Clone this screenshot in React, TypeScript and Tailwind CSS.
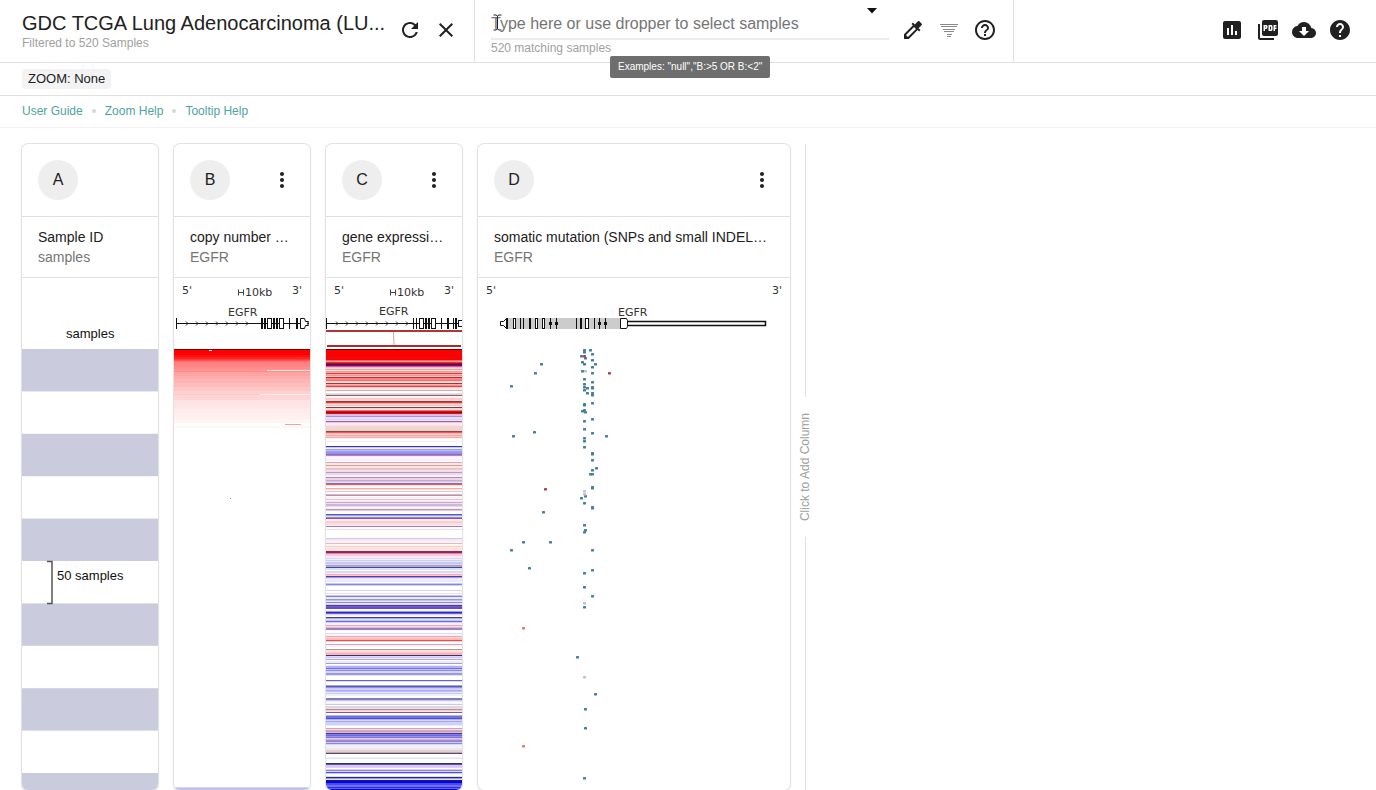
import type { ReactNode } from "react";
import {
  MdAssessment,
  MdClose,
  MdCloudDownload,
  MdColorize,
  MdHelp,
  MdHelpOutline,
  MdMoreVert,
  MdPictureAsPdf,
  MdRefresh,
} from "react-icons/md";

type Rect = [x: number, y: number, w: number, h: number];

/* Runs of colour: each entry holds from its row until the next entry. */
const EXPRESSION = `
349 700000,350 ff0000,357 ee0c0c,358 ff0000,360 ff6060,361 ffa0a0,362 e03030,363 b01020,364 600050,365 7a0a80,
366 c060a0,367 ffb8b8,368 ffdddd,369 e8a0a0,370 fff0e8,371 ff9090,372 ffb0a0,373 d04040,374 ffb0b0,375 ff9090,
376 ffc8c8,377 b83030,378 ff8080,380 ff6a6a,381 ffd0d0,382 ffe8e8,383 b03030,384 ffb0b0,385 ff8888,386 e04040,
387 ffd0d0,388 ffe8e8,390 e8a0a0,391 ffffff,393 e8e0e0,394 d8d0d8,395 906070,396 ffffff,397 ffeeee,398 ffcccc,
400 ffdddd,401 b03030,402 c84040,403 ffa8a8,404 f7e0e0,405 ffc0c0,406 fff6ee,407 a03030,408 ffd0d0,409 ffe8e8,
410 f07070,411 d01818,412 a00808,413 d81818,414 e0b0e0,415 e0c0f0,416 b090c8,417 e8e0ff,419 d8d8ff,420 f8d8f0,
421 907090,422 e8c8d8,423 ffe8ff,425 ffe0e0,426 f0d8d0,428 e8d8d0,430 e8d0d0,431 a04040,432 e06060,433 ffb0b0,
434 ffc8c8,435 e0b0a8,436 ffc8c8,437 e8b0a8,438 ffeeee,439 ffffff,441 f4eef0,442 ffffff,445 ffffff,446 3838a0,
447 c8c8ff,448 f0f0ff,449 a0a0e0,450 b8c0ff,451 a0a0e8,452 9890f0,454 8070c0,455 c080c0,456 f8e8f8,457 fff4ff,
459 f8f0ff,461 ffffff,462 d8a8a8,463 ffe4e4,465 d0a0a0,466 ffe8e8,468 f0c0c0,469 e8c8c8,470 ffe0e0,471 f0d8f0,
472 b0a0c8,473 e8d8f0,475 fff0ff,477 b090a0,478 ffd0d8,479 e0d8ff,480 c8a8d8,481 d8c8e8,482 e8e0f8,483 8070a0,
484 e06060,485 ffd8d8,486 ffffff,488 ffa8a8,489 ffd8d8,490 ffffff,491 d8c8d0,492 ffffff,494 e0b0c0,495 b890b0,
496 ffffff,497 ffeeee,499 d8c8d8,500 fff0f0,501 e8e8ff,502 e0a0b8,503 e8e0ff,504 c8b8e0,506 e8d8f0,507 ffffff,
508 ffe8e8,509 b0a0a8,510 e8c0e8,511 ffffff,514 5858c0,515 a0a0f0,516 e0e0ff,517 9090c0,518 c03898,519 ffffff,
520 fff0f0,521 ffcccc,523 ffe0e0,524 ffd8d8,525 fff0f0,526 9080c8,527 ffffff,529 e8e0f0,530 ffffff,538 d0c8f0,
539 f0e8ff,541 fff0f0,543 d8c0c0,544 fff8f0,546 ffc8c0,547 ffe8e8,548 ffe0e0,551 803060,553 e080a8,554 ffc8d8,
556 ffe8f8,558 d8d8ff,559 f0f0ff,560 c8d0ff,561 e8e8ff,562 c8c8f0,564 e0d8f0,565 a8a0b8,566 b8a8d8,567 404898,
568 d8e0ff,570 ffffff,571 d8d8f8,573 fff0f0,574 ffa8a8,575 ffc8d8,576 5838a0,577 a0a0f0,578 e0e0ff,579 f0f0ff,
580 e8e8ff,582 ffffff,583 c8c8e8,584 8888d8,585 d0d0ff,586 ffffff,590 d8d0f0,591 ffffff,593 e8e0f0,594 ffffff,
595 c8c8f8,596 8080c8,597 e8e8ff,599 9898c8,600 c0c0ff,601 e8e8ff,602 8888e8,603 e8e8ff,604 d0d0ff,605 504080,
606 8060a0,607 6048e8,609 ffffff,610 f0f0ff,611 a0a0d8,612 2828c0,613 6060e8,614 d8d8ff,615 ffe8f8,616 ffffff,
617 484078,618 a8a8ff,619 e8e8ff,620 c0c0ff,621 7070c8,622 d0d0ff,623 f8f0f8,625 e0b0b8,626 ffd8d8,627 e0b8d8,
628 a080c0,630 ffffff,633 d8d8ff,634 f8f8ff,635 f8f0f0,636 e8a8a8,637 ffd8d8,638 ffb8b8,640 d05858,641 ffc8c8,
642 ffffff,644 d0a0c8,645 fff0f0,647 ffffff,649 a89898,650 ffe0d8,652 ffc8c8,653 f0b8b8,655 483070,656 e0d8ff,
657 c8c8ff,658 f0f0ff,659 a8a8f0,660 ffffff,661 e8e8ff,663 a8a0b8,664 ffffff,665 e8e8ff,666 b0b0ff,668 7070e8,
669 c8c8ff,670 8888f0,671 d8d8ff,673 a098d8,675 e0e0ff,676 ffffff,680 6868b8,681 d8d8ff,682 ffffff,685 a8a8c0,
686 5858c0,687 9090e8,688 c8c8ff,689 d8d8ff,690 a8a8f0,691 c0c0ff,692 e8e8ff,693 c8c8ff,694 f0f0ff,696 ffffff,
698 8080b8,700 c8c8f0,701 e8e8ff,702 ffffff,703 f8f0ff,704 c8c8f0,705 ffffff,706 d8d8e8,708 e8e0e8,709 b09090,
710 ffc8c8,711 ffe0e0,712 7858a8,713 ffffff,715 b0b0e8,716 7070e0,718 5050c8,719 b0b0ff,720 d8d8ff,721 a8a8e8,
722 d0d0ff,725 e8e8ff,726 ffffff,728 c0a8c8,729 ffd8e8,730 d0a8c0,731 c8a0b0,732 e0b8d8,733 483890,734 8080f0,
735 6868e0,736 9890f0,737 7878e0,738 d8c8f0,739 e0b0c8,740 9888c8,742 c8c8ff,743 8888e0,744 d8d8ff,745 f0f0ff,
747 f8f0f0,748 f0e8e8,750 e0d0d0,752 c0a8a8,753 604870,754 ffffff,757 f0f0ff,758 e0e0ff,759 ffffff,761 ffffff,
763 303060,764 5858a8,765 d8c8f0,767 e0d0f8,768 ffffff,769 e0c8e8,770 8888f0,771 d8d8ff,772 5050d0,773 c8c8ff,
774 ffffff,776 d8d8ff,777 303060,778 9898f0,779 e8e8ff,780 1010b0,782 0000e0,783 4848ff,785 7070ff,787 3030c8,
788 6060ff,789 0808d0,790 0000c0`;

const COPY_NUMBER = `
349 800000,350 ff0000,354 fa0000,355 ff1010,357 ff2222,359 ff3a3a,360 ff5454,361 ff7272,362 ff8080,366 ff8a8a,
369 ff9494,371 ff8c8c,372 ffa2a2,376 ffacac,379 ffb4b4,383 ffbcbc,387 ffc6c6,391 ffd0d0,394 ffc6c6,395 ffd4d4,
400 ffe2e2,404 ffe6e6,408 ffebeb,414 fff0f0,419 fff4f4,423 ffffff,426 fff6f6,428 ffffff,787 d4d4f4,788 c0c0ee`;

const TOP = 278;
const BOTTOM = 790;

function toRuns(data: string) {
  const stops = data
    .trim()
    .split(/,\s*/)
    .map((entry) => {
      const [row, fill] = entry.split(" ");
      return { row: Number(row), fill: "#" + fill };
    });
  return stops.map((stop, i) => ({
    y: stop.row - TOP,
    h: (stops[i + 1]?.row ?? BOTTOM) - stop.row,
    fill: stop.fill,
  }));
}

function Heatmap({ data }: { data: string }) {
  return (
    <g shapeRendering="crispEdges">
      {toRuns(data).map((run) => (
        <rect key={run.y} x="0" y={run.y} width="136" height={Math.max(run.h, 0)} fill={run.fill} />
      ))}
    </g>
  );
}

const BLUE_DOTS: [number, number][] = [
  [104, 10], [110, 10], [104, 12], [112, 14], [101, 16], [105, 18], [112, 20], [102, 22], [104, 24], [115, 24],
  [112, 27], [61, 24], [55, 33], [31, 46], [102, 31], [112, 33], [104, 39], [112, 42], [104, 44], [104, 47],
  [107, 48], [112, 47], [104, 50], [107, 53], [112, 53], [112, 55], [112, 48], [104, 64], [104, 65], [112, 63],
  [102, 71], [104, 70], [105, 72], [104, 81], [112, 79], [104, 89], [112, 93], [54, 92], [33, 96], [126, 96],
  [104, 98], [104, 101], [104, 107], [112, 113], [112, 114], [112, 120], [116, 128], [112, 130], [110, 134],
  [112, 134], [112, 147], [112, 148], [105, 156], [101, 158], [104, 163], [112, 167], [112, 168], [63, 172],
  [104, 185], [105, 190], [104, 192], [43, 202], [70, 202], [31, 210], [112, 210], [49, 228], [104, 233],
  [112, 230], [104, 247], [112, 256], [104, 267], [97, 317], [115, 354], [105, 369], [105, 388], [104, 438],
];
const RED_DOTS: [number, number][] = [[104, 16], [129, 33], [65, 149]];
const PINK_DOTS: [number, number][] = [[43, 288], [43, 406]];
const PALE_DOTS: [number, number][] = [[105, 31], [104, 151], [104, 154], [104, 263], [104, 337]];

function Dots({ points, fill }: { points: [number, number][]; fill: string }) {
  return (
    <g fill={fill}>
      {points.map(([x, y], i) => (
        <rect key={i} x={x + 1} y={y + 61} width="3" height="2.5" rx="0.6" />
      ))}
    </g>
  );
}

function Solid({ marks }: { marks: Rect[] }) {
  return (
    <g fill="#111">
      {marks.map(([x, y, w, h], i) => (
        <rect key={i} x={x} y={y} width={w} height={h} />
      ))}
    </g>
  );
}

function Hollow({ marks }: { marks: Rect[] }) {
  return (
    <g fill="#fff" stroke="#111">
      {marks.map(([x, y, w, h], i) => (
        <rect key={i} x={x + 0.5} y={y + 0.5} width={w - 1} height={h - 1} />
      ))}
    </g>
  );
}

function Chevrons({ start, count }: { start: number; count: number }) {
  return (
    <g fill="none" stroke="#333">
      {Array.from({ length: count }, (_, i) => (
        <path key={i} d={`M${start + i * 10} 43.5l2 2-2 2`} />
      ))}
    </g>
  );
}

function Ends({ right }: { right: number }) {
  return (
    <g fontFamily="DejaVu Sans, sans-serif" fontSize="11" fill="#333">
      <text x="8" y="16">5'</text>
      <text x={right} y="16">3'</text>
    </g>
  );
}

function ScaleBar() {
  return (
    <g>
      <path d="M64.5 11.5v6M64.5 14.5h5M69.5 11.5v6" stroke="#444" fill="none" />
      <text x="71" y="18" fontFamily="DejaVu Sans, sans-serif" fontSize="11" fill="#333">10kb</text>
    </g>
  );
}

function GeneLabel({ x, y }: { x: number; y: number }) {
  return (
    <text x={x} y={y} fontFamily="DejaVu Sans, sans-serif" fontSize="11" fill="#333">EGFR</text>
  );
}

function Plot({ width, label, children }: { width: number; label: string; children: ReactNode }) {
  return (
    <svg
      viewBox={`0 0 ${width} 512`}
      role="img"
      aria-label={label}
      className="block h-[512px] w-full"
      preserveAspectRatio="xMinYMin slice"
    >
      {children}
    </svg>
  );
}

function SamplesPlot() {
  return (
    <Plot width={136} label="Sample ID">
      <g fill="#cbcbde">
        {[0, 1, 2, 3, 4, 5].map((i) => (
          <rect key={i} x="0" y={71 + i * 84.8} width="136" height="42.4" />
        ))}
      </g>
      <g fontFamily="Liberation Sans, Arial, sans-serif" fontSize="13" fill="#111">
        <text x="44" y="60">samples</text>
        <text x="35" y="302">50 samples</text>
      </g>
      <path d="M25 283.5h5v42H25" fill="none" stroke="#555" strokeWidth="1.5" />
    </Plot>
  );
}

function CopyNumberPlot() {
  return (
    <Plot width={136} label="Copy number">
      <Ends right={118} />
      <ScaleBar />
      <GeneLabel x={54} y={38} />
      <Solid marks={[[2, 40, 1, 11], [2, 45, 133, 1]]} />
      <Chevrons start={12} count={7} />
      <Solid
        marks={[[87, 40, 2, 11], [90, 40, 2, 11], [99, 40, 2, 11], [102, 40, 2, 11], [115, 40, 1, 11], [122, 40, 2, 11]]}
      />
      <Hollow marks={[[93, 40, 5, 11], [105, 40, 5, 11]]} />
      <path d="M126.500 40.5h4l1 3h3l-1 2 1 2h-3l-1 3h-4z" fill="#fff" stroke="#111" />
      <Heatmap data={COPY_NUMBER} />
      <g shapeRendering="crispEdges">
        <rect x="35" y="72" width="3" height="1" fill="#fff" />
        <rect x="93" y="92" width="43" height="1" fill="#ffe8e8" />
        <rect x="86" y="116" width="50" height="1" fill="#fff0f0" />
        <rect x="111" y="146" width="16" height="1" fill="#f2a0a0" />
        <rect x="56" y="220" width="1" height="1" fill="#8888b8" />
      </g>
    </Plot>
  );
}

function ExpressionPlot() {
  return (
    <Plot width={136} label="Gene expression">
      <Ends right={118} />
      <ScaleBar />
      <GeneLabel x={53} y={37} />
      <Solid marks={[[0, 40, 1, 11], [0, 45, 136, 1]]} />
      <Chevrons start={10} count={8} />
      <Solid
        marks={[[87, 40, 1, 11], [90, 40, 1, 11], [99, 40, 2, 11], [102, 40, 2, 11], [115, 40, 1, 11], [121, 40, 2, 11], [127, 40, 1, 11], [129, 40, 2, 11]]}
      />
      <Hollow marks={[[93, 40, 5, 11], [105, 40, 5, 11], [132, 42, 5, 7]]} />
      <rect x="0" y="52" width="136" height="2" fill="#b03535" />
      <path d="M67.500 54l.5 13" stroke="#e89a9a" />
      <rect x="1" y="67" width="134" height="2" fill="#a03030" />
      <Heatmap data={EXPRESSION} />
    </Plot>
  );
}

function MutationPlot() {
  return (
    <Plot width={312} label="Somatic mutation">
      <Ends right={294} />
      <rect x="29" y="40" width="114" height="11" fill="#ccc" />
      <GeneLabel x={140} y={38} />
      <path d="M22.500 43.5h3l3-3v10l-3-3h-3z" fill="#fff" stroke="#111" />
      <Solid
        marks={[[28, 40, 2, 11], [42, 40, 1, 11], [45, 40, 1, 11], [51, 40, 2, 11], [72, 40, 1, 11], [71, 44, 3, 3], [78, 40, 1, 11], [77, 44, 3, 3], [98, 40, 1, 11], [102, 40, 2, 11], [116, 40, 1, 11], [121, 40, 1, 11], [120, 44, 3, 3], [127, 40, 1, 11], [126, 44, 3, 3]]}
      />
      <Hollow marks={[[35, 40, 3, 11], [57, 40, 3, 11], [64, 40, 3, 11], [107, 40, 4, 11]]} />
      <rect x="149" y="43.500" width="138.500" height="4" fill="#fff" stroke="#111" strokeWidth="1.5" />
      <path d="M142.500 40.500h6l1 2v6l-1 2h-6z" fill="#fff" stroke="#111" />
      <Dots points={BLUE_DOTS} fill="#41809f" />
      <Dots points={PALE_DOTS} fill="#c6bfd0" />
      <Dots points={RED_DOTS} fill="#b8404c" />
      <Dots points={PINK_DOTS} fill="#e07878" />
    </Plot>
  );
}

function Column({
  letter,
  title,
  subtitle,
  menu = true,
  wide = false,
  children,
}: {
  letter: string;
  title: string;
  subtitle: string;
  menu?: boolean;
  wide?: boolean;
  children: ReactNode;
}) {
  return (
    <section
      className={
        "overflow-hidden rounded-md bg-white shadow-[0_0_0_1px_#e2e2e2,0_1px_3px_rgba(0,0,0,0.12)] " +
        (wide ? "w-78" : "w-34")
      }
    >
      <div className="flex items-center justify-between border-b border-[#e0e0e0] p-4">
        <span className="flex size-10 items-center justify-center rounded-full bg-[#eee] text-base">{letter}</span>
        {menu && (
          <button type="button" aria-label={`Column ${letter} menu`}>
            <MdMoreVert className="size-6" />
          </button>
        )}
      </div>
      <div className="border-b border-[#e0e0e0] px-4 py-2.5 text-sm leading-5">
        <h2 className="whitespace-nowrap">{title}</h2>
        <p className="text-[#757575]">{subtitle}</p>
      </div>
      {children}
    </section>
  );
}

function FilterIcon() {
  return (
    <svg viewBox="0 0 24 24" className="size-6" fill="none" stroke="#8a8a8a">
      <path d="M3 6.500h18M4 8.500h16M6 11.500h12M7 13.500h10M10 16.500h5M10 18.500h4" />
    </svg>
  );
}

function IconButton({ label, children }: { label: string; children: ReactNode }) {
  return (
    <button type="button" aria-label={label} className="shrink-0">
      {children}
    </button>
  );
}

export default function App() {
  return (
    <div className="flex min-h-screen flex-col bg-white font-['Liberation_Sans',Arial,sans-serif] text-[#212121]">
      <header className="flex h-[63px] border-b border-[#e0e0e0]">
        <div className="flex items-center gap-3 border-r border-[#e0e0e0] pr-4 pb-0.5 pl-[22px]">
          <div className="w-[364px] pt-0.5">
            <h1 className="text-xl leading-6 whitespace-nowrap">GDC TCGA Lung Adenocarcinoma (LU...</h1>
            <p className="text-xs leading-4 text-[#a0a0a0]">Filtered to 520 Samples</p>
          </div>
          <IconButton label="Reload">
            <MdRefresh className="size-6" />
          </IconButton>
          <IconButton label="Close">
            <MdClose className="size-6" />
          </IconButton>
        </div>
        <div className="flex items-center gap-3 border-r border-[#e0e0e0] px-4 pb-0.5">
          <div className="relative w-[398px]">
            <input
              type="text"
              aria-label="Select samples"
              placeholder="Type here or use dropper to select samples"
              className="block h-9 w-full border-b-2 border-[#ececec] pt-1.5 text-base outline-none placeholder:text-[#757575]"
            />
            <p className="text-xs leading-4 text-[#a0a0a0]">520 matching samples</p>
            <svg viewBox="0 0 10 6" className="absolute top-1 right-3 h-1.5 w-2.5" aria-hidden="true">
              <path d="M0 0h10L5 5.500z" fill="#111" />
            </svg>
            <svg viewBox="0 0 9 17" className="absolute top-2.5 left-0.5 h-[17px] w-[9px]" aria-hidden="true">
              <path d="M0.500 1h2.500l1.500 1 1.500-1h2.500M4.500 2v13M0.500 16h2.500l1.500-1 1.500 1h2.500" fill="none" stroke="#222" />
            </svg>
            <div
              role="tooltip"
              className="absolute top-full left-[119px] z-10 rounded-xs bg-[#6e6e6e] px-2 text-[10px] leading-[22px] whitespace-nowrap text-white"
            >
              Examples: "null","B:&gt;5 OR B:&lt;2"
            </div>
          </div>
          <IconButton label="Pick samples">
            <MdColorize className="size-6" />
          </IconButton>
          <IconButton label="Filter">
            <FilterIcon />
          </IconButton>
          <IconButton label="Search help">
            <MdHelpOutline className="size-6" />
          </IconButton>
        </div>
        <div className="ml-auto flex items-center gap-3 pr-6 pb-0.5">
          <IconButton label="Chart">
            <MdAssessment className="size-6" />
          </IconButton>
          <IconButton label="Export PDF">
            <MdPictureAsPdf className="size-6" />
          </IconButton>
          <IconButton label="Download">
            <MdCloudDownload className="size-6" />
          </IconButton>
          <IconButton label="Help">
            <MdHelp className="size-6" />
          </IconButton>
        </div>
      </header>

      <div className="flex h-[33px] items-center border-b border-[#e0e0e0] px-[22px]">
        <span className="rounded-sm bg-[#f3f3f3] px-1.5 text-[13px] leading-5">ZOOM: None</span>
      </div>

      <nav className="flex h-8 items-center gap-[9px] border-b border-[#f2f2f2] px-[22px] pb-0.5 text-xs text-[#4fa3a0]">
        <a href="#user-guide">User Guide</a>
        <span className="size-1 rounded-full bg-[#d8d8d8]" />
        <a href="#zoom-help">Zoom Help</a>
        <span className="size-1 rounded-full bg-[#d8d8d8]" />
        <a href="#tooltip-help">Tooltip Help</a>
      </nav>

      <main className="flex flex-1 items-stretch px-[22px] pt-4">
        <div className="flex gap-4">
          <Column letter="A" title="Sample ID" subtitle="samples" menu={false}>
            <SamplesPlot />
          </Column>
          <Column letter="B" title="copy number …" subtitle="EGFR">
            <CopyNumberPlot />
          </Column>
          <Column letter="C" title="gene expressi…" subtitle="EGFR">
            <ExpressionPlot />
          </Column>
          <Column letter="D" title="somatic mutation (SNPs and small INDEL…" subtitle="EGFR" wide>
            <MutationPlot />
          </Column>
        </div>
        <button type="button" className="flex w-[30px] flex-col items-center gap-4 text-xs text-[#9e9e9e]">
          <span className="w-px flex-1 bg-[#e0e0e0]" />
          <span className="rotate-180 [writing-mode:vertical-rl]">Click to Add Column</span>
          <span className="w-px flex-1 bg-[#e0e0e0]" />
        </button>
      </main>
    </div>
  );
}
